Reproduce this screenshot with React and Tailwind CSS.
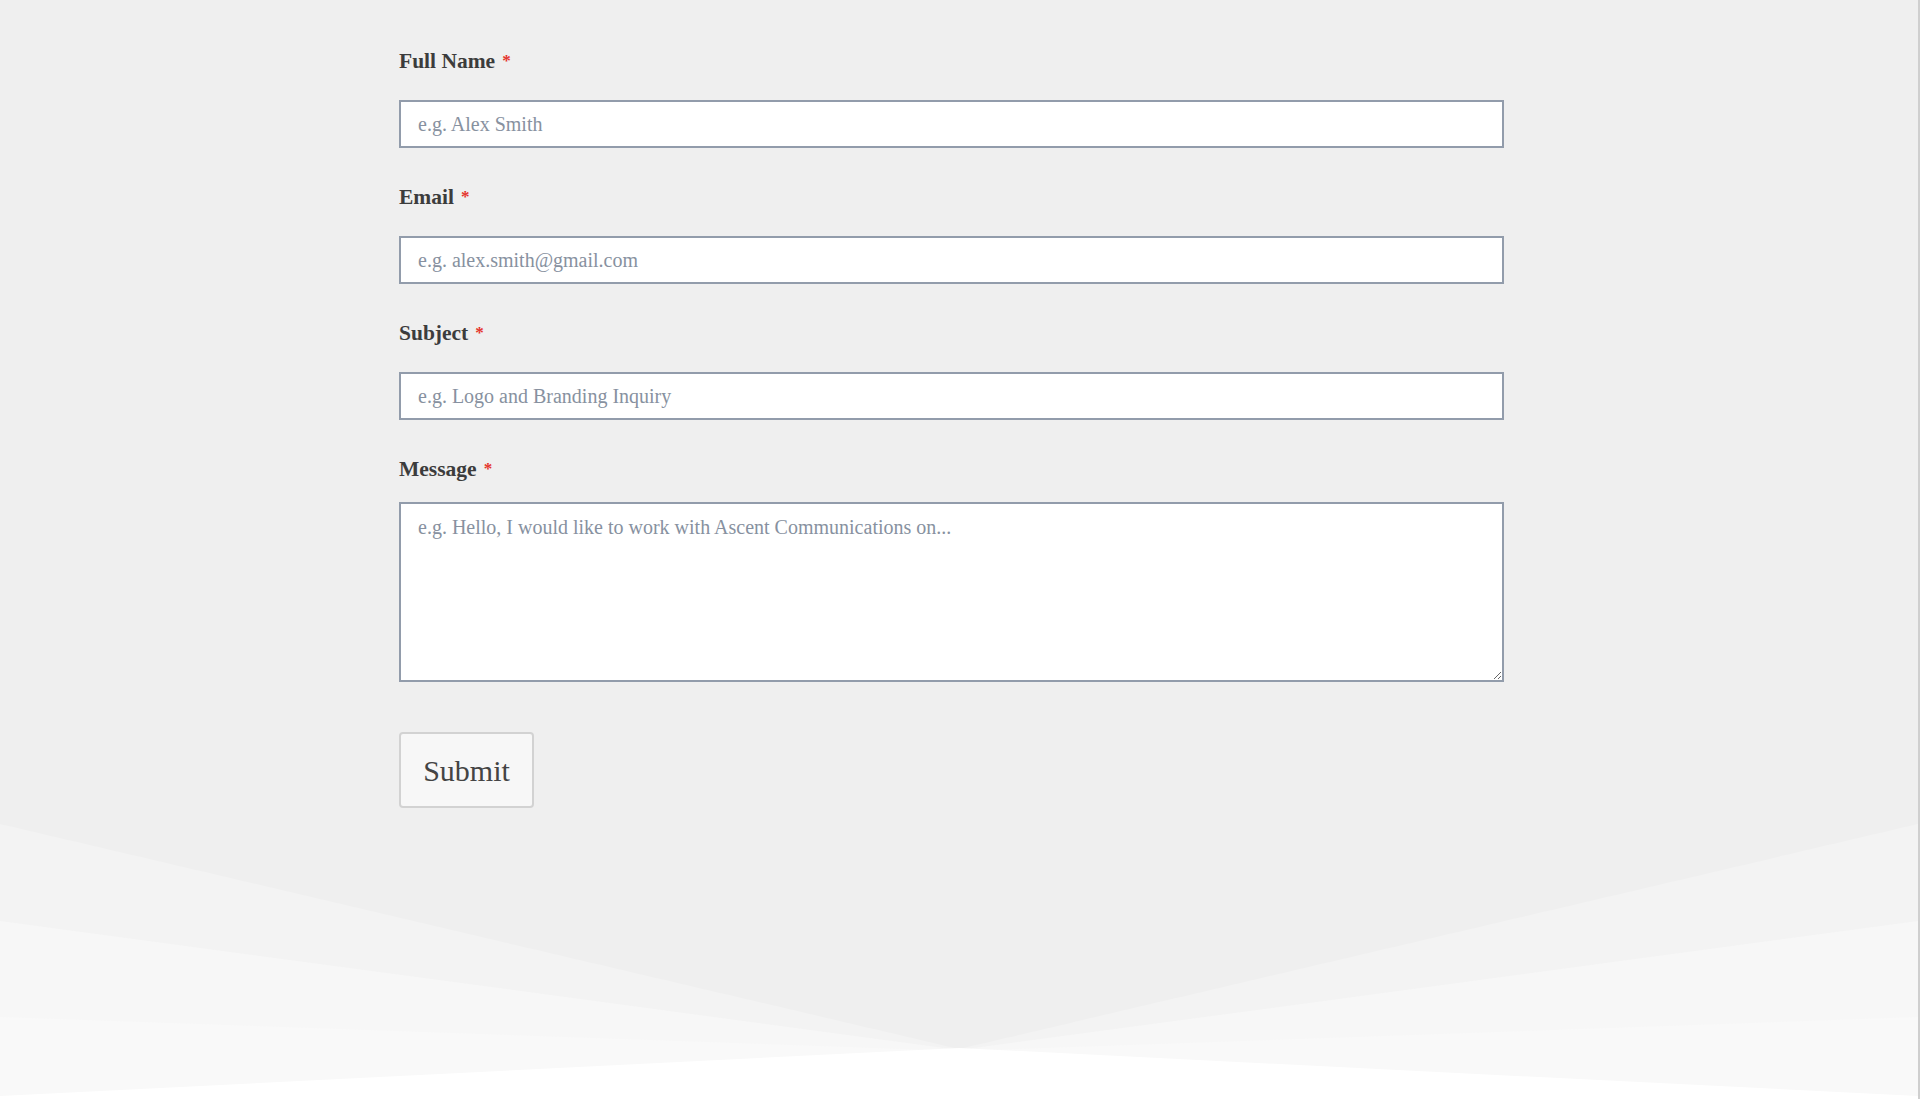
import React from "react";

const fields = [
  { label: "Full Name", type: "text", placeholder: "e.g. Alex Smith", mt: "mt-[47px]" },
  { label: "Email", type: "email", placeholder: "e.g. alex.smith@gmail.com", mt: "mt-[35px]" },
  { label: "Subject", type: "text", placeholder: "e.g. Logo and Branding Inquiry", mt: "mt-[35px]" },
];

function Label({ children, className }) {
  return (
    <label className={`flex h-[30px] items-center text-[21.5px] font-bold leading-none text-[#3c3c3c] ${className}`}>
      {children}
      <span className="ml-[7px] -translate-y-[2px] text-[17px] text-[#e5342c]">*</span>
    </label>
  );
}

export default function App() {
  return (
    <div
      className="flex min-h-[1099px] w-full flex-col border-r-2 border-[#cfcfcf] bg-[#efefef]"
      style={{ fontFamily: '"Liberation Serif", "DejaVu Serif", serif' }}
    >
      <form className="w-[1504px] pl-[399px]" onSubmit={(e) => e.preventDefault()}>
        {fields.map((f) => (
          <div key={f.label} className={f.mt}>
            <Label>{f.label}</Label>
            <input
              type={f.type}
              placeholder={f.placeholder}
              className="mt-[23px] block h-[48px] w-full border-2 border-[#929cab] bg-white px-[17px] text-[20px] text-[#333] outline-none placeholder:text-[#8791a0]"
            />
          </div>
        ))}

        <div className="mt-[35px]">
          <Label>Message</Label>
          <textarea
            placeholder="e.g. Hello, I would like to work with Ascent Communications on..."
            className="mt-[17px] block h-[180px] w-full border-2 border-[#929cab] bg-white px-[17px] pt-[11px] text-[20px] leading-[24px] text-[#333] outline-none placeholder:text-[#8791a0]"
          />
        </div>

        <button
          type="submit"
          className="mt-[50px] flex h-[76px] w-[135px] items-center justify-center rounded-[4px] border-2 border-[#d2d2d2] bg-[#f7f7f7] text-[30px] text-[#444]"
        >
          Submit
        </button>
      </form>

      <svg
        className="mt-auto block h-[275px] w-full"
        viewBox="0 0 1920 275"
        preserveAspectRatio="none"
      >
        <polygon points="0,0 960,225 1920,0 1920,275 0,275" fill="#f3f3f3" />
        <polygon points="0,97 960,226 1920,97 1920,275 0,275" fill="#f7f7f7" />
        <polygon points="0,193 960,227 1920,193 1920,275 0,275" fill="#f9f9f9" />
        <polygon points="0,272 960,224 1920,272 1920,275 0,275" fill="#ffffff" />
      </svg>
    </div>
  );
}
